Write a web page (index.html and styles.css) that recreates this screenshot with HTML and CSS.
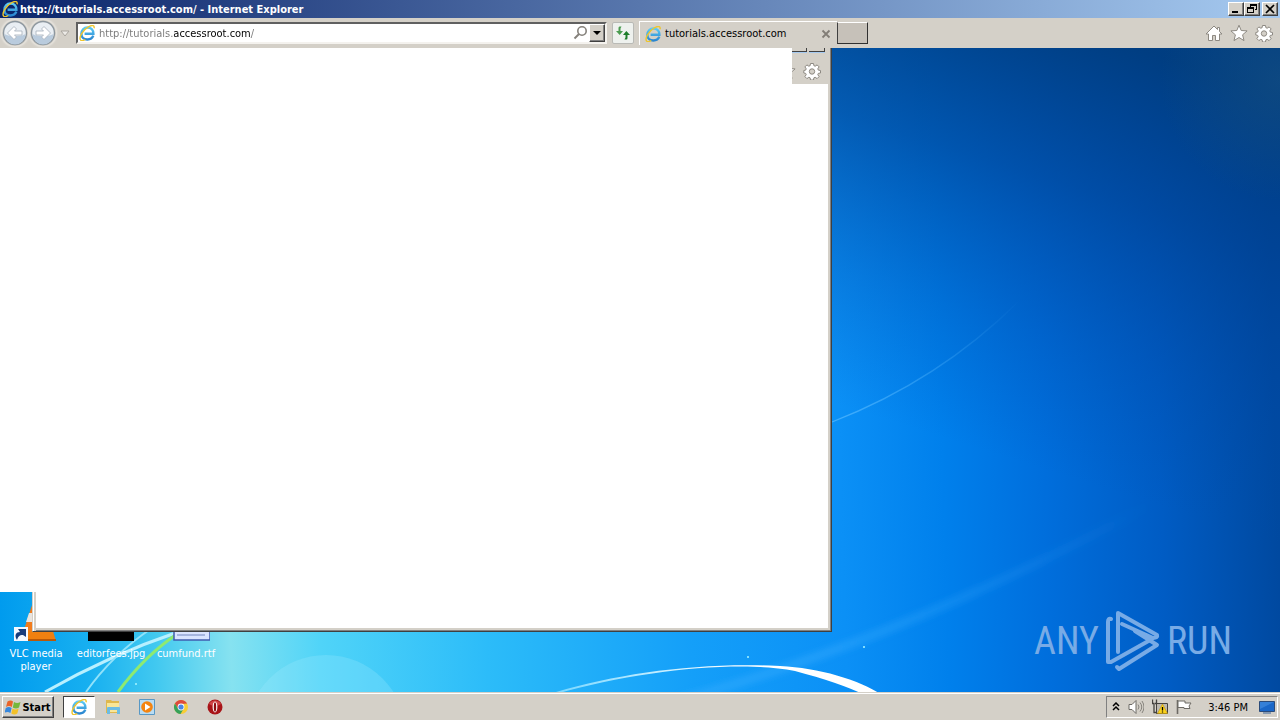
FILE: index.html
```html
<!DOCTYPE html>
<html lang="en">
<head>
<meta charset="utf-8">
<title>http://tutorials.accessroot.com/ - Internet Explorer</title>
<link rel="stylesheet" href="styles.css">
</head>
<body>
<svg class="defs" aria-hidden="true">
  <defs>
    <linearGradient id="ie-blue" x1="0" y1="0" x2="0" y2="1"><stop offset="0" stop-color="#5ccbf5"/><stop offset="1" stop-color="#2a86d0"/></linearGradient>
    <symbol id="ie" viewBox="0 0 16 16">
      <path d="M14.300 10.700C13.400 13.100 11.200 14.500 8.400 14.500 4.900 14.500 2.400 12.100 2.400 8.700 2.400 5.200 4.900 2.500 8.400 2.500c3.900 0 6.100 2.700 6 6.300H5.600" fill="none" stroke="url(#ie-blue)" stroke-width="2.400"/>
      <path d="M1.800 15.200C-.8 12.700 4 4.700 9.800 1.600c3.600-1.900 6-1.300 5.200 1.700M1.800 15.200c1 .8 2.800.3 4.500-.7" fill="none" stroke="#eec52c" stroke-width="1.400"/>
    </symbol>
    <symbol id="gear" viewBox="0 0 18 18">
      <path d="M7.500 1.500h3l.4 2.200 1.300.5 1.900-1.300 2 2-1.300 1.900.5 1.300 2.200.4v2.500l-2.200.4-.5 1.300 1.300 1.900-2 2-1.900-1.300-1.300.5-.4 2.200h-3l-.4-2.200-1.300-.5-1.900 1.300-2-2 1.300-1.900-.5-1.300L.8 11V8.500l1.900-.4.5-1.300-1.300-1.900 2-2 1.900 1.300 1.300-.5z" fill="#fff" stroke="#8d8982"/>
      <circle cx="9" cy="9.500" r="2.700" fill="#d4d0c8" stroke="#8d8982"/>
    </symbol>
    <symbol id="star" viewBox="0 0 18 18">
      <path d="M9 1.200l2.200 5.300 5.900.4-4.500 3.900 1.400 5.800L9 13.500l-5 3.100 1.400-5.800L.9 6.900l5.900-.4z" fill="#fff" stroke="#8d8982"/>
    </symbol>
  </defs>
</svg>

<header class="titlebar">
  <svg class="icon16"><use href="#ie"/></svg>
  <h1 class="title">http://tutorials.accessroot.com/ - Internet Explorer</h1>
  <div class="window-buttons">
    <button class="win-btn" aria-label="Minimize"><svg viewBox="0 0 14 12"><path d="M3 8h6v2H3z"/></svg></button>
    <button class="win-btn" aria-label="Restore"><svg viewBox="0 0 14 12"><path d="M5 1h7v6h-2V6h1V3H6v1H5zM2 4h7v6H2zm1 2v3h5V6z" fill-rule="evenodd"/></svg></button>
    <button class="win-btn close" aria-label="Close"><svg viewBox="0 0 14 12"><path d="M3 2l8 8M11 2l-8 8" stroke="#000" stroke-width="1.700"/></svg></button>
  </div>
</header>

<nav class="toolbar">
  <div class="history">
    <button class="round" aria-label="Back"><svg viewBox="0 0 26 26"><circle cx="13" cy="13" r="11.500" fill="#e9eef3" stroke="#8d979f" stroke-width="1.400"/><path d="M2.500 14c5 3 16 3 21 0a10.500 10.500 0 0 1-21 0z" fill="#b9cbdd"/><path d="M5.500 13l6.500-6.500 2.500 2.500-2 2H20v4h-7.500l2 2L12 19.500z" fill="#fff" stroke="#a4afba" stroke-width=".8"/></svg></button>
    <button class="round" aria-label="Forward"><svg viewBox="0 0 26 26"><circle cx="13" cy="13" r="11.500" fill="#e9eef3" stroke="#8d979f" stroke-width="1.400"/><path d="M2.500 14c5 3 16 3 21 0a10.500 10.500 0 0 1-21 0z" fill="#b9cbdd"/><path d="M20.500 13L14 6.500 11.500 9l2 2H6v4h7.500l-2 2 2.500 2.500z" fill="#fff" stroke="#a4afba" stroke-width=".8"/></svg></button>
    <button class="plain recent" aria-label="Recent pages"><svg viewBox="0 0 10 7"><path d="M1 1h8L5 6z" fill="#eceae6" stroke="#aaa69f"/></svg></button>
  </div>
  <div class="address">
    <svg class="icon16"><use href="#ie"/></svg>
    <input class="url" type="text" aria-label="Address" value="http://tutorials.accessroot.com/">
    <button class="plain search" aria-label="Search"><svg viewBox="0 0 16 16"><circle cx="10" cy="6" r="4.200" fill="none" stroke="#85817b" stroke-width="1.600"/><path d="M7 9L2.500 13.500" stroke="#85817b" stroke-width="2"/></svg></button>
    <button class="win-btn drop" aria-label="Show address list"><svg viewBox="0 0 14 14"><path d="M3 5h8L7 9z"/></svg></button>
  </div>
  <button class="refresh" aria-label="Refresh"><svg viewBox="0 0 16 16"><path d="M6.500 1.500H4.500Q3.500 1.500 3.500 3v3H1l3.700 4L8 6H5.500V3.500z" fill="#4a9c50"/><path d="M9.500 14.500h2Q12.500 14.500 12.500 13v-3H15l-3.700-4L8 10h2.500v2.500z" fill="#1e7d2b"/></svg></button>
  <div class="tab">
    <svg class="icon16"><use href="#ie"/></svg>
    <span class="tab-title">tutorials.accessroot.com</span>
    <button class="plain tab-close" aria-label="Close tab"><svg viewBox="0 0 10 10"><path d="M1.500 1.500l7 7M8.500 1.500l-7 7" stroke="#827d76" stroke-width="1.800"/></svg></button>
  </div>
  <button class="new-tab" aria-label="New tab"></button>
  <div class="tools">
    <button class="plain" aria-label="Home"><svg viewBox="0 0 18 18"><path d="M9 2L1 10h2.500v6.500h4v-5h3v5h4V10H17l-2.500-2.500v-4h-2v2z" fill="#fff" stroke="#8d8982"/></svg></button>
    <button class="plain" aria-label="Favorites"><svg><use href="#star"/></svg></button>
    <button class="plain" aria-label="Tools"><svg><use href="#gear"/></svg></button>
  </div>
</nav>

<main class="desktop">
  <svg class="wallpaper" viewBox="0 48 1280 644" preserveAspectRatio="none" aria-hidden="true">
    <defs>
      <linearGradient id="sky" gradientUnits="userSpaceOnUse" x1="0" y1="640" x2="1280" y2="600">
        <stop offset="0" stop-color="#009bee"/><stop offset=".07" stop-color="#18b0f0"/><stop offset=".12" stop-color="#40c8f0"/><stop offset=".18" stop-color="#86e2f0"/>
        <stop offset=".25" stop-color="#50d4f8"/><stop offset=".38" stop-color="#2cbcf9"/><stop offset=".54" stop-color="#149ff9"/>
        <stop offset=".66" stop-color="#0b90f6"/><stop offset=".74" stop-color="#0080ec"/><stop offset=".82" stop-color="#006edc"/>
        <stop offset=".91" stop-color="#005cc4"/><stop offset="1" stop-color="#0049a0"/>
      </linearGradient>
      <linearGradient id="night" gradientUnits="userSpaceOnUse" x1="1110" y1="40" x2="980" y2="450">
        <stop offset="0" stop-color="#003b7c" stop-opacity=".92"/><stop offset=".35" stop-color="#004090" stop-opacity=".65"/><stop offset=".7" stop-color="#0048a4" stop-opacity=".28"/><stop offset="1" stop-color="#0050b0" stop-opacity="0"/>
      </linearGradient>
      <radialGradient id="teal" gradientUnits="userSpaceOnUse" cx="1280" cy="80" r="120"><stop offset="0" stop-color="#1a5484" stop-opacity=".5"/><stop offset="1" stop-color="#1a5484" stop-opacity="0"/></radialGradient>
      <linearGradient id="ray" gradientUnits="userSpaceOnUse" x1="800" y1="0" x2="1150" y2="0"><stop offset="0" stop-color="#40b0ff" stop-opacity=".4"/><stop offset="1" stop-color="#40b0ff" stop-opacity="0"/></linearGradient>
      <linearGradient id="thin" gradientUnits="userSpaceOnUse" x1="830" y1="0" x2="1020" y2="0"><stop offset="0" stop-color="#5cbcff" stop-opacity=".7"/><stop offset="1" stop-color="#5cbcff" stop-opacity="0"/></linearGradient>
      <linearGradient id="arc" gradientUnits="userSpaceOnUse" x1="560" y1="0" x2="740" y2="0"><stop offset="0" stop-color="#7cd8ff"/><stop offset="1" stop-color="#fff"/></linearGradient>
      <filter id="soft"><feGaussianBlur stdDeviation="0.700"/></filter>
      <filter id="softer"><feGaussianBlur stdDeviation="3"/></filter>
    </defs>
    <rect y="48" width="1280" height="644" fill="url(#sky)"/>
    <rect y="48" width="1280" height="644" fill="url(#night)"/>
    <rect x="1100" y="48" width="180" height="170" fill="url(#teal)"/>
    <path d="M680 700Q900 640 1150 505" fill="none" stroke="url(#ray)" stroke-width="9" filter="url(#softer)"/>
    <path d="M832 422Q940 380 1020 300" fill="none" stroke="url(#thin)" stroke-width="1.300"/>
    <circle cx="326" cy="735" r="80" fill="#a4ecff" fill-opacity=".25"/>
    <path d="M556 694C640 670 740 660 795 671C825 679 850 687 866 696L884 696C860 680 820 668 780 666C700 662 620 673 556 692z" fill="url(#arc)" filter="url(#soft)"/>
    <g fill="none" filter="url(#soft)">
      <path d="M45 692Q110 655 178 632" stroke="#b8f0ff" stroke-width="3"/>
      <path d="M86 692Q112 655 152 628" stroke="#90e2fa" stroke-width="2"/>
      <path d="M118 692Q145 655 180 632" stroke="#8eea70" stroke-width="3"/>
    </g>
    <g fill="#a8f4ff"><circle cx="136" cy="684" r="1"/><circle cx="748" cy="657" r="1"/><circle cx="864" cy="647" r="1"/></g>
  </svg>

  <div class="shortcut vlc">
    <svg viewBox="0 0 48 48"><path d="M22 4h4l11 34H11z" fill="#f27c1c"/><path d="M17 18h14l3 9H14z" fill="#e9e4df"/><path d="M7 36h34l3 10H4z" fill="#f08010"/><path d="M4 44h40v2H4z" fill="#b85808"/><path d="M2 32h14v14H2z" fill="#f4f8ff"/><path d="M5 45c-3-5-1-8 3-8L6 34h8v8l-3-2c-4 0-5 2-6 5z" fill="#183c7c"/></svg>
    <span>VLC media player</span>
  </div>
  <div class="shortcut jpg">
    <svg viewBox="0 0 48 48"><path d="M1 12h46v34H1z"/></svg>
    <span>editorfees.jpg</span>
  </div>
  <div class="shortcut rtf">
    <svg viewBox="0 0 48 48"><path d="M12 2h36v43H12z" fill="#d9e4ff" stroke="#405cae" stroke-width="1.500"/><path d="M15 34h28M15 40h28" stroke="#7286be"/></svg>
    <span>cumfund.rtf</span>
  </div>

  <section class="back-window" aria-label="Internet Explorer">
    <div class="back-tools">
      <i class="edge"></i><i class="edge"></i>
      <svg class="cut-star"><use href="#star"/></svg>
      <svg class="cut-gear"><use href="#gear"/></svg>
    </div>
  </section>
  <section class="page" aria-label="Page"></section>

  <div class="brand">
    <span>ANY</span>
    <svg viewBox="0 0 56 62" fill="none" stroke="#78abe6" stroke-width="4" stroke-linejoin="round" stroke-linecap="round"><path d="M6 9Q3 8 3 12V52H6L47 29"/><path d="M13 42V3L52 25Q53 28 48 28L17 14"/><path d="M30 21L52 35 14 59 12 57"/></svg>
    <span>RUN</span>
  </div>
</main>

<footer class="taskbar">
  <button class="start"><svg viewBox="0 0 16 16"><path d="M2.500 2.500c2-1.500 4-1.500 5.500 0L6.800 8C5 6.500 3 6.500 1 8z" fill="#ea6428"/><path d="M9 3c2 1.300 4 1.300 6.500 0L14 8.500c-2 1.300-4 1.300-6.200 0z" fill="#75b83c"/><path d="M.8 9c2-1.500 4-1.500 5.800 0l-1.200 5c-2-1.500-4-1.500-6 0z" fill="#3688dd"/><path d="M7.500 9.500c2 1.300 4 1.300 6.200 0l-1.400 5c-2 1.300-4 1.300-6 0z" fill="#f3c128"/></svg>Start</button>
  <button class="task active" aria-label="Internet Explorer"><svg><use href="#ie"/></svg></button>
  <button class="task" aria-label="Windows Explorer"><svg viewBox="0 0 16 16"><path d="M1 1h5l1 1h7v12H1z" fill="#dfb84e"/><path d="M2 4h12v9H2z" fill="#f8e698"/><path d="M2 15V9q0-1 1-1h11q1 0 1 1v6h-3v-4H5v4z" fill="#6cbce4"/></svg></button>
  <button class="task" aria-label="Media Player"><svg viewBox="0 0 16 16"><path d="M.5.5h15v15H.5z" fill="#b9dcf3" stroke="#5898c5"/><circle cx="8" cy="8" r="5.800" fill="#f48410"/><path d="M6 4.500v7L11.500 8z" fill="#fff"/></svg></button>
  <button class="task" aria-label="Chrome"><svg viewBox="0 0 16 16"><circle cx="8" cy="8" r="7" fill="#f8cd35"/><path d="M1.900 4.500A7 7 0 0 1 14.100 4.500L8 5 5 9.500z" fill="#dd4a3c"/><path d="M1.900 4.500A7 7 0 0 0 7.500 15L10.500 10 5 9.500z" fill="#36a15a"/><circle cx="8" cy="8" r="3.400" fill="#fff"/><circle cx="8" cy="8" r="2.600" fill="#4a86e4"/></svg></button>
  <button class="task" aria-label="Opera"><svg viewBox="0 0 16 16"><circle cx="8" cy="8" r="7.500" fill="#a81418"/><path d="M2 5a7 7 0 0 1 12 0q-6 4-12 0z" fill="#cf4548"/><ellipse cx="8" cy="8" rx="2.400" ry="5.400" fill="#fff"/><ellipse cx="8" cy="8" rx="1.200" ry="4.800" fill="#8c0c10"/></svg></button>
  <div class="tray">
    <button class="plain chevron" aria-label="Show hidden icons"><svg viewBox="0 0 8 10"><path d="M1 4l3-3 3 3M1 8l3-3 3 3" fill="none" stroke="#000" stroke-width="1.500"/></svg></button>
    <svg viewBox="0 0 16 16"><path d="M1 5.500h3l4-4v13l-4-4H1z" fill="#fff" stroke="#6d6a65"/><path d="M10 5.500q2 2.500 0 5M12 3.500q3.500 4.500 0 9M14 2q4 6 0 12" fill="none" stroke="#85827c"/></svg>
    <svg viewBox="0 0 16 16"><path d="M4.500 4.500h11v10h-11z" fill="#bdb9b0" stroke="#44423e"/><path d="M.5.500v4h1.500v9H5M4.500.5v4H3" fill="none" stroke="#44423e" stroke-width="1.300"/><path d="M10.500 5l5 9.500h-10z" fill="#fbd31c" stroke="#bf930a" stroke-width=".6"/><path d="M10.500 8v3.500M10.500 12.500v1" stroke="#000" stroke-width="1.300"/></svg>
    <svg viewBox="0 0 16 16"><path d="M1.500 1v14" stroke="#6d6a65" stroke-width="1.600"/><path d="M2 2h7v2h6l-2 3 1 2.500H8V8.500H2z" fill="#fff" stroke="#6d6a65"/></svg>
    <time class="clock">3:46 PM</time>
    <svg viewBox="0 0 16 16"><path d="M.5 2.500h15v10H.5z" fill="#1a67c8" stroke="#2b4b79"/><path d="M1 3h14L1 10z" fill="#3580d8"/><path d="M4 14h8" stroke="#6d87a8" stroke-width="1.500"/></svg>
  </div>
</footer>
</body>
</html>
```
FILE: styles.css
```css
* { box-sizing: border-box; }

body {
  margin: 0;
  height: 100vh;
  display: flex;
  flex-direction: column;
  overflow: hidden;
  background: #d4d0c8;
  color: #000;
  font: 11px/13px "DejaVu Sans Condensed", "DejaVu Sans", sans-serif;
}

button, input { font: inherit; color: inherit; margin: 0; padding: 0; }
button { display: flex; align-items: center; justify-content: center; flex: none; }
svg { display: block; flex: none; }
.defs { position: absolute; width: 0; height: 0; }
.icon16 { width: 16px; height: 16px; }
.plain { background: none; border: 0; }

.win-btn {
  width: 16px;
  height: 14px;
  background: #d4d0c8;
  border: 1px solid;
  border-color: #fff #404040 #404040 #fff;
  box-shadow: inset -1px -1px #808080;
}
.win-btn svg { width: 14px; height: 12px; }

.titlebar {
  flex: none;
  height: 18px;
  display: flex;
  align-items: center;
  gap: 2px;
  padding: 0 2px;
  background: linear-gradient(90deg, #0a246a, #a6caf0);
  color: #fff;
}
.title { margin: 0; flex: 1; font-size: 11px; font-weight: bold; white-space: nowrap; }
.window-buttons { display: flex; }
.close { margin-left: 2px; }

.toolbar {
  flex: none;
  height: 30px;
  display: flex;
  align-items: center;
  padding: 0 7px 0 2px;
}
.history { display: flex; align-items: center; gap: 2px; width: 74px; }
.round { width: 26px; height: 26px; border: 0; border-radius: 50%; background: none; box-shadow: 0 0 2px 1px #ece9e4; }
.round svg { width: 26px; height: 26px; }
.recent svg { width: 10px; height: 7px; margin-left: 2px; }

.address {
  width: 531px;
  height: 22px;
  display: flex;
  align-items: center;
  padding: 0 0 0 1px;
  gap: 4px;
  background: #fff;
  border: 2px solid;
  border-color: #606060 #f4f2ee #f4f2ee #606060;
}
.url {
  flex: 1;
  min-width: 0;
  height: 16px;
  border: 0;
  outline: 0;
  color: transparent;
  background: linear-gradient(90deg, #777 75px, #000 75px, #000 152px, #777 152px);
  background-clip: text;
}
.search { margin-right: -3px; }
.search svg { width: 16px; height: 16px; }
.drop { width: 16px; height: 18px; }
.drop svg { width: 14px; height: 14px; }
.refresh {
  width: 22px;
  height: 22px;
  margin-left: 5px;
  background: #eef1ee;
  border: 1px solid #b9bab6;
  border-radius: 2px;
}
.refresh svg { width: 16px; height: 16px; }

.tab {
  width: 198px;
  height: 24px;
  display: flex;
  align-items: center;
  gap: 4px;
  margin-left: 5px;
  padding: 0 6px 0 5px;
  border: 1px solid #fff;
  border-width: 1px 0 0 1px;
}
.tab-title { flex: 1; }
.tab-close svg { width: 10px; height: 10px; }
.new-tab {
  width: 31px;
  height: 22px;
  background: #c6c1b9;
  border: 1px solid;
  border-color: #fff #303030 #303030 #404040;
}
.tools { display: flex; gap: 7px; margin-left: auto; }
.tools svg { width: 18px; height: 18px; }

.desktop { position: relative; flex: 1; min-height: 0; overflow: hidden; }
.wallpaper { position: absolute; inset: 0; width: 100%; height: 100%; }

.back-window {
  position: absolute;
  left: 32px;
  top: 0;
  width: 800px;
  height: 584px;
  background: #fff;
  border: 1px solid;
  border-color: transparent #404040 #404040 #d4d0c8;
  border-top: 0;
  box-shadow: inset 1px 0 #fff, inset 3px 0 #d4d0c8, inset -1px -1px #808080, inset -3px -3px #d4d0c8;
}
.back-tools {
  position: absolute;
  right: 3px;
  top: 0;
  width: 37px;
  height: 36px;
  background: #d4d0c8;
  overflow: hidden;
}
.edge {
  float: left;
  width: 16px;
  height: 4px;
  margin-right: 2px;
  background: #d4d0c8;
  border: solid #404040;
  border-width: 0 1px 1px 0;
  box-shadow: 0 1px #a6caf0;
}
.cut-star, .cut-gear { position: absolute; top: 14px; width: 18px; height: 18px; }
.cut-star { left: -13px; }
.cut-gear { left: 12px; }
.page { position: absolute; left: 0; top: 0; width: 792px; height: 544px; background: #fff; }

.shortcut {
  position: absolute;
  top: 547px;
  width: 74px;
  display: flex;
  flex-direction: column;
  align-items: center;
  gap: 4px;
  text-align: center;
  color: #fff;
}
.shortcut svg { width: 48px; height: 48px; }
.shortcut span { padding: 0 8px; }
.vlc { left: -1px; }
.jpg { left: 74px; }
.rtf { left: 149px; }

.brand {
  position: absolute;
  right: 48px;
  bottom: 20px;
  display: flex;
  align-items: center;
  gap: 6px;
  color: #78abe6;
  font: 38px/40px "Roboto Condensed", "Roboto", sans-serif;
}
.brand svg { width: 56px; height: 62px; }

.taskbar {
  flex: none;
  height: 28px;
  display: flex;
  align-items: center;
  padding: 1px 2px 0;
  border-top: 1px solid #d4d0c8;
  box-shadow: inset 0 1px #fff;
}
.start {
  width: 52px;
  height: 22px;
  gap: 1px;
  margin-right: 9px;
  background: #d4d0c8;
  border: 1px solid;
  border-color: #fff #404040 #404040 #fff;
  box-shadow: inset -1px -1px #808080;
  font-size: 11px;
  font-weight: bold;
}
.start svg { width: 16px; height: 16px; }
.task { width: 32px; height: 22px; margin-right: 2px; background: none; border: 0; }
.task svg { width: 16px; height: 16px; }
.active {
  background: #fff;
  border: 1px solid;
  border-color: #404040 #fff #fff #404040;
}
.tray {
  height: 22px;
  margin-left: auto;
  display: flex;
  align-items: center;
  gap: 8px;
  padding: 0 2px 0 5px;
  border: 1px solid;
  border-color: #808080 #fff #fff #808080;
}
.tray svg { width: 16px; height: 16px; }
.tray .chevron svg { width: 8px; height: 10px; }
.clock { margin: 0 3px 0 8px; white-space: nowrap; }
```
